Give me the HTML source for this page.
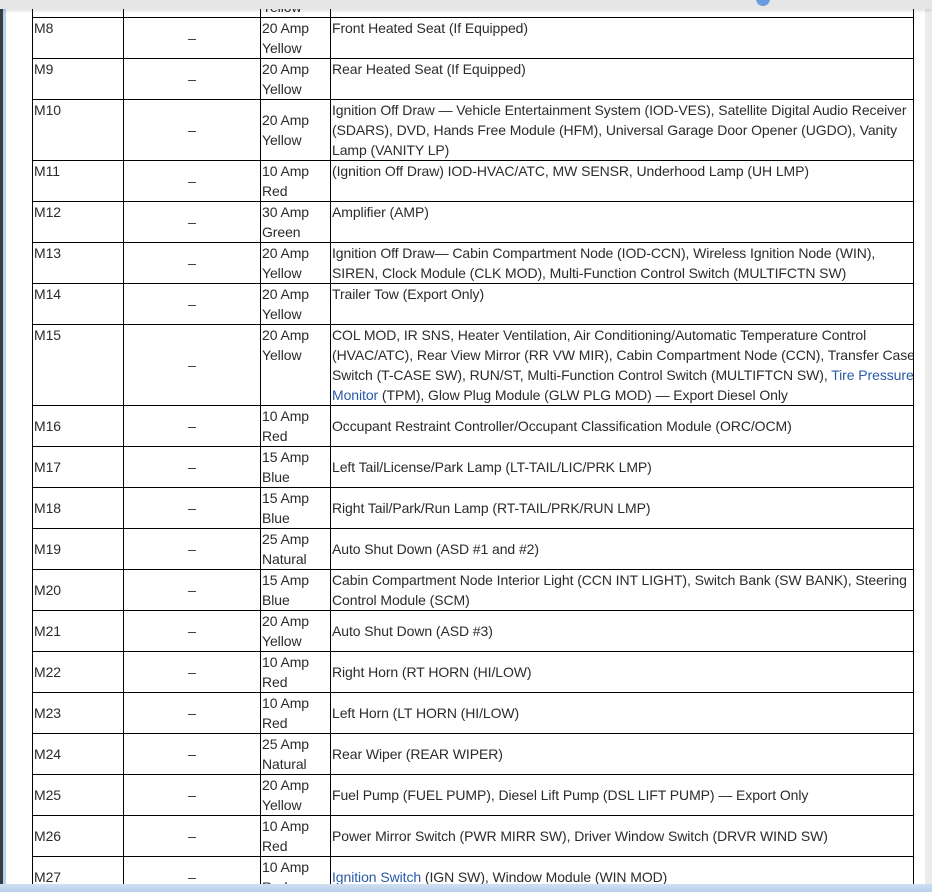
<!DOCTYPE html>
<html><head><meta charset="utf-8"><style>
html,body{margin:0;padding:0;width:932px;height:892px;overflow:hidden;background:#fff;font-family:"Liberation Sans",sans-serif;}
#w{position:relative;width:932px;height:892px;overflow:hidden;}
.lb{position:absolute;left:0;top:0;width:3px;height:892px;background:#3a3f45;}
.lb2{position:absolute;left:3px;top:0;width:3px;height:892px;background:#b9d3ee;}
.rb{position:absolute;right:0;top:0;width:7px;height:892px;background:#ececec;}
.top{position:absolute;left:0;top:0;width:932px;height:9px;background:#e6e6e6;box-shadow:0 2px 3px rgba(0,0,0,.12);z-index:5;}
.bot{position:absolute;left:0;top:884px;width:932px;height:8px;background:linear-gradient(#cfe0f3,#b7cfe9);z-index:5;}
table{position:absolute;left:32px;top:-24px;border-collapse:collapse;table-layout:fixed;width:881px;}
td{border:1px solid #000;padding:0 1px;font-size:14px;letter-spacing:-0.08px;line-height:20px;color:#2b2b2b;vertical-align:top;white-space:nowrap;overflow:hidden;}
td.d{text-align:center;vertical-align:middle;}
tr.m td{vertical-align:middle;}
a{color:#2a5aa8;text-decoration:none;}
</style></head><body><div id="w">
<div class="lb"></div><div class="lb2"></div><div class="rb"></div>
<div class="top"><div style="position:absolute;left:756px;top:-8px;width:14px;height:14px;border-radius:50%;background:#6a9be0"></div></div>
<table>
<colgroup><col style="width:91px"><col style="width:137px"><col style="width:70px"><col style="width:583px"></colgroup>
<tr style="height:41px"><td></td><td class="d"></td><td>20 Amp<br>Yellow</td><td></td></tr>
<tr><td>M8</td><td class="d">–</td><td>20 Amp<br>Yellow</td><td>Front Heated Seat (If Equipped)</td></tr>
<tr><td>M9</td><td class="d">–</td><td>20 Amp<br>Yellow</td><td>Rear Heated Seat (If Equipped)</td></tr>
<tr><td>M10</td><td class="d">–</td><td style="vertical-align:middle">20 Amp<br>Yellow</td><td>Ignition Off Draw — Vehicle Entertainment System (IOD-VES), Satellite Digital Audio Receiver<br>(SDARS), DVD, Hands Free Module (HFM), Universal Garage Door Opener (UGDO), Vanity<br>Lamp (VANITY LP)</td></tr>
<tr><td>M11</td><td class="d">–</td><td>10 Amp<br>Red</td><td>(Ignition Off Draw) IOD-HVAC/ATC, MW SENSR, Underhood Lamp (UH LMP)</td></tr>
<tr><td>M12</td><td class="d">–</td><td>30 Amp<br>Green</td><td>Amplifier (AMP)</td></tr>
<tr><td>M13</td><td class="d">–</td><td>20 Amp<br>Yellow</td><td>Ignition Off Draw— Cabin Compartment Node (IOD-CCN), Wireless Ignition Node (WIN),<br>SIREN, Clock Module (CLK MOD), Multi-Function Control Switch (MULTIFCTN SW)</td></tr>
<tr><td>M14</td><td class="d">–</td><td>20 Amp<br>Yellow</td><td>Trailer Tow (Export Only)</td></tr>
<tr><td>M15</td><td class="d">–</td><td>20 Amp<br>Yellow</td><td>COL MOD, IR SNS, Heater Ventilation, Air Conditioning/Automatic Temperature Control<br>(HVAC/ATC), Rear View Mirror (RR VW MIR), Cabin Compartment Node (CCN), Transfer Case<br>Switch (T-CASE SW), RUN/ST, Multi-Function Control Switch (MULTIFTCN SW), <a>Tire Pressure</a><br><a>Monitor</a> (TPM), Glow Plug Module (GLW PLG MOD) — Export Diesel Only</td></tr>
<tr class="m"><td>M16</td><td class="d">–</td><td>10 Amp<br>Red</td><td>Occupant Restraint Controller/Occupant Classification Module (ORC/OCM)</td></tr>
<tr class="m"><td>M17</td><td class="d">–</td><td>15 Amp<br>Blue</td><td>Left Tail/License/Park Lamp (LT-TAIL/LIC/PRK LMP)</td></tr>
<tr class="m"><td>M18</td><td class="d">–</td><td>15 Amp<br>Blue</td><td>Right Tail/Park/Run Lamp (RT-TAIL/PRK/RUN LMP)</td></tr>
<tr class="m"><td>M19</td><td class="d">–</td><td>25 Amp<br>Natural</td><td>Auto Shut Down (ASD #1 and #2)</td></tr>
<tr class="m"><td>M20</td><td class="d">–</td><td>15 Amp<br>Blue</td><td>Cabin Compartment Node Interior Light (CCN INT LIGHT), Switch Bank (SW BANK), Steering<br>Control Module (SCM)</td></tr>
<tr class="m"><td>M21</td><td class="d">–</td><td>20 Amp<br>Yellow</td><td>Auto Shut Down (ASD #3)</td></tr>
<tr class="m"><td>M22</td><td class="d">–</td><td>10 Amp<br>Red</td><td>Right Horn (RT HORN (HI/LOW)</td></tr>
<tr class="m"><td>M23</td><td class="d">–</td><td>10 Amp<br>Red</td><td>Left Horn (LT HORN (HI/LOW)</td></tr>
<tr class="m"><td>M24</td><td class="d">–</td><td>25 Amp<br>Natural</td><td>Rear Wiper (REAR WIPER)</td></tr>
<tr class="m"><td>M25</td><td class="d">–</td><td>20 Amp<br>Yellow</td><td>Fuel Pump (FUEL PUMP), Diesel Lift Pump (DSL LIFT PUMP) — Export Only</td></tr>
<tr class="m"><td>M26</td><td class="d">–</td><td>10 Amp<br>Red</td><td>Power Mirror Switch (PWR MIRR SW), Driver Window Switch (DRVR WIND SW)</td></tr>
<tr class="m"><td>M27</td><td class="d">–</td><td>10 Amp<br>Red</td><td><a>Ignition Switch</a> (IGN SW), Window Module (WIN MOD)</td></tr>
</table>
<div class="bot"></div>
</div></body></html>
